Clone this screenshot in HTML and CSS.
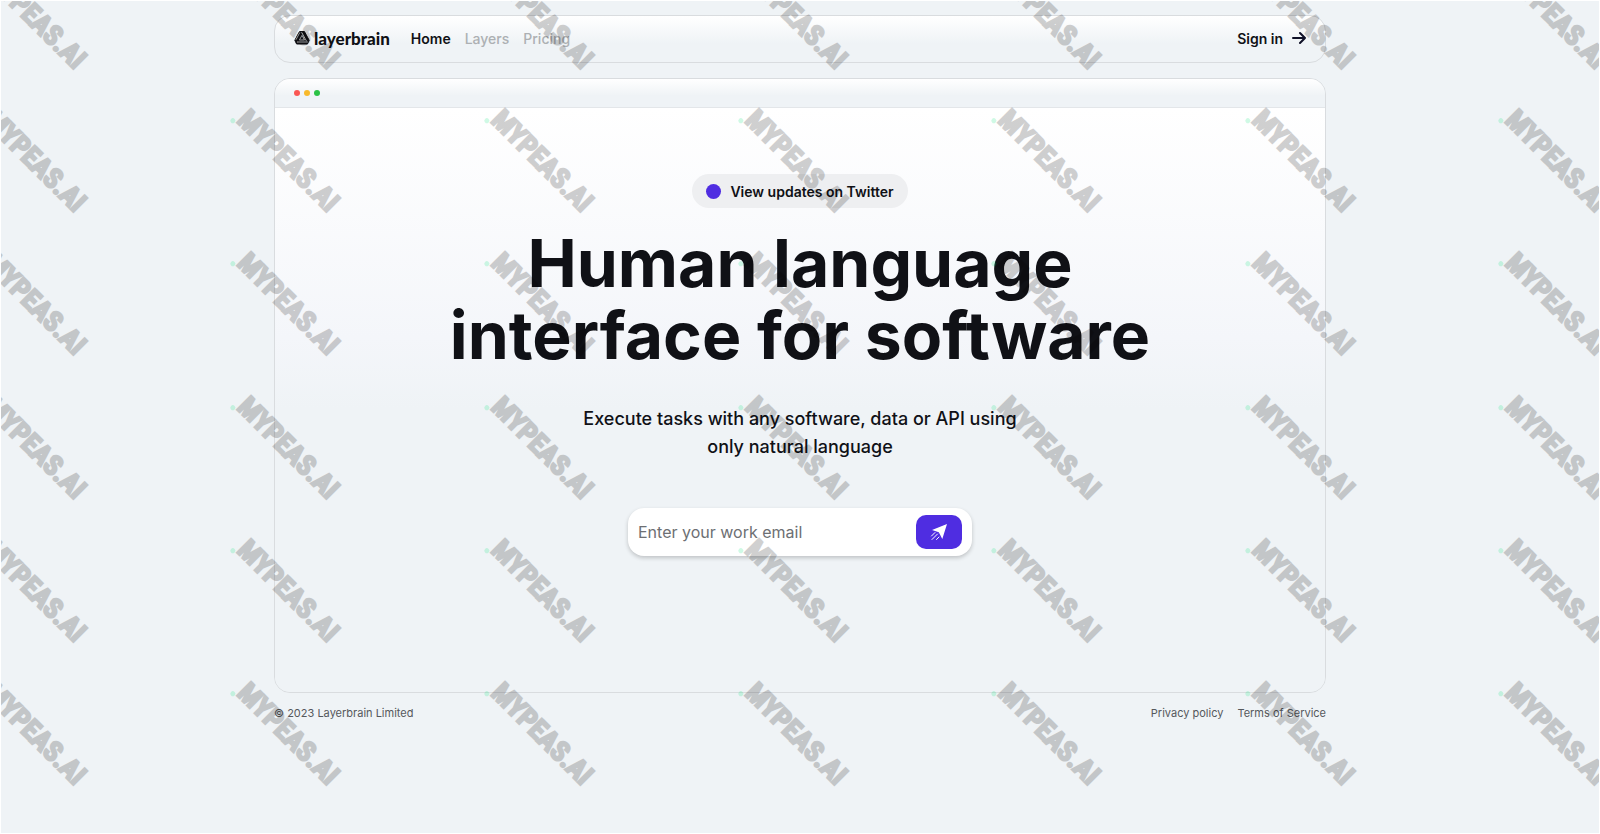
FILE: index.html
```html
<!DOCTYPE html>
<html lang="en">
<head>
<meta charset="utf-8">
<meta name="viewport" content="width=device-width, initial-scale=1">
<title>Layerbrain</title>
<link rel="stylesheet" href="styles.css">
</head>
<body>
<div class="page">
  <header class="nav">
    <a class="brand" href="#">
      <svg class="brand-mark" viewBox="0 0 16 16" aria-hidden="true">
        <path class="mark-body" d="M5.600 1.500h4.800L15.200 10.300l-1.800 3.700H2.600L.8 10.300z"/>
        <path class="mark-line" d="M8 5.300 10.600 10H5.400zM5.800 2.500 2 9.700M7.600 2.300l5 9M13.800 12H3"/>
      </svg>
      <span>layerbrain</span>
    </a>
    <nav class="links">
      <a class="link active" href="#">Home</a>
      <a class="link" href="#">Layers</a>
      <a class="link" href="#">Pricing</a>
    </nav>
    <a class="signin" href="#">Sign in
      <svg class="arrow" viewBox="0 0 14 14" aria-hidden="true"><path d="M1 7h12M8 2l5 5-5 5"/></svg>
    </a>
  </header>
  <main class="window">
    <div class="titlebar"><i class="dot red"></i><i class="dot yellow"></i><i class="dot green"></i></div>
    <section class="hero">
      <a class="pill" href="#"><i class="pill-dot"></i>View updates on Twitter</a>
      <h1 class="title">Human language<br>interface for software</h1>
      <p class="lead">Execute tasks with any software, data or API using<br>only natural language</p>
      <form class="signup">
        <input class="email" type="email" aria-label="Work email" placeholder="Enter your work email">
        <button class="send" type="button" aria-label="Send">
          <svg class="plane" viewBox="0 0 18 18" aria-hidden="true"><path class="wing" d="M17 1 12.300 16 8.800 9.200 2 7z"/><path class="trail" d="M1.500 13 5 9.500M2 16.500l5.500-5.500M6.500 16.500l2.500-2.500"/></svg>
        </button>
      </form>
    </section>
  </main>
  <footer class="footer">
    <span>© 2023 Layerbrain Limited</span>
    <nav class="legal"><a href="#">Privacy policy</a><a href="#">Terms of Service</a></nav>
  </footer>
</div>
<div class="overlay" aria-hidden="true">
<div class="marks">
  <span class="mark">MYPEAS.AI</span><span class="mark">MYPEAS.AI</span><span class="mark">MYPEAS.AI</span><span class="mark">MYPEAS.AI</span><span class="mark">MYPEAS.AI</span><span class="mark">MYPEAS.AI</span><span class="mark">MYPEAS.AI</span>
  <span class="mark">MYPEAS.AI</span><span class="mark">MYPEAS.AI</span><span class="mark">MYPEAS.AI</span><span class="mark">MYPEAS.AI</span><span class="mark">MYPEAS.AI</span><span class="mark">MYPEAS.AI</span><span class="mark">MYPEAS.AI</span>
  <span class="mark">MYPEAS.AI</span><span class="mark">MYPEAS.AI</span><span class="mark">MYPEAS.AI</span><span class="mark">MYPEAS.AI</span><span class="mark">MYPEAS.AI</span><span class="mark">MYPEAS.AI</span><span class="mark">MYPEAS.AI</span>
  <span class="mark">MYPEAS.AI</span><span class="mark">MYPEAS.AI</span><span class="mark">MYPEAS.AI</span><span class="mark">MYPEAS.AI</span><span class="mark">MYPEAS.AI</span><span class="mark">MYPEAS.AI</span><span class="mark">MYPEAS.AI</span>
  <span class="mark">MYPEAS.AI</span><span class="mark">MYPEAS.AI</span><span class="mark">MYPEAS.AI</span><span class="mark">MYPEAS.AI</span><span class="mark">MYPEAS.AI</span><span class="mark">MYPEAS.AI</span><span class="mark">MYPEAS.AI</span>
  <span class="mark">MYPEAS.AI</span><span class="mark">MYPEAS.AI</span><span class="mark">MYPEAS.AI</span><span class="mark">MYPEAS.AI</span><span class="mark">MYPEAS.AI</span><span class="mark">MYPEAS.AI</span><span class="mark">MYPEAS.AI</span>
</div>
</div>
</body>
</html>
```
FILE: styles.css
```css
* { box-sizing: border-box; }
body {
  position: relative;
  min-height: 100vh;
  margin: 0;
  border: 1px solid #fff;
  background: #eff3f6;
  color: #101116;
  font-family: Inter, "Liberation Sans", sans-serif;
}
a { color: inherit; text-decoration: none; }
.page { max-width: 1084px; margin: 0 auto; padding: 14px 16px; }
.nav {
  display: flex;
  align-items: center;
  height: 48px;
  padding: 0 19px 2px;
  border: 1px solid #d9dcdf;
  border-radius: 16px;
  background: linear-gradient(#fff, #eff3f6 60%);
  font-size: 14px;
  font-weight: 600;
}
.brand { display: flex; align-items: center; gap: 4px; font: 900 17px Lato, sans-serif; }
.brand-mark { width: 16px; height: 16px; }
.mark-body { fill: #101116; stroke: #101116; stroke-width: 1; stroke-linejoin: round; }
.mark-line { fill: none; stroke: #b9bcbf; stroke-width: 1; }
.links { display: flex; gap: 14px; margin-left: 21px; }
.link { color: #adb0b3; font-weight: 500; }
.active { color: #101116; font-weight: 600; }
.signin { display: flex; align-items: center; gap: 9px; margin-left: auto; }
.arrow { width: 14px; height: 14px; fill: none; stroke: #101128; stroke-width: 2; stroke-linecap: round; stroke-linejoin: round; }
.window { margin-top: 15px; border: 1px solid #d9dcdf; border-radius: 16px; overflow: hidden; }
.titlebar {
  display: flex;
  align-items: center;
  gap: 4px;
  height: 29px;
  padding: 0 19px;
  border-bottom: 1px solid #e3e6e9;
  background: linear-gradient(#fff, #eff3f6 60%);
}
.dot { width: 6px; height: 6px; border-radius: 50%; }
.red { background: #fa5753; }
.yellow { background: #f8b92b; }
.green { background: #2bc245; }
.hero {
  display: flex;
  flex-direction: column;
  align-items: center;
  padding: 66px 16px 136px;
  background: linear-gradient(#fff, #f4f6fa 230px, #eff3f6 300px);
  text-align: center;
}
.pill {
  display: flex;
  align-items: center;
  gap: 9px;
  height: 34px;
  padding: 0 14px;
  border-radius: 17px;
  background: #eeeff1;
  font-size: 14px;
  font-weight: 600;
}
.pill-dot { width: 15px; height: 15px; border-radius: 50%; background: #4f2de1; }
.title { margin: 19px 0 0; font-size: 66px; font-weight: 700; line-height: 72px; }
.lead { margin: 34px 0 0; font-size: 18px; font-weight: 500; line-height: 28px; }
.signup {
  display: flex;
  align-items: center;
  width: 344px;
  height: 48px;
  margin-top: 47px;
  padding: 0 10px;
  border-radius: 16px;
  background: #fff;
  box-shadow: 0 2px 4px rgba(0, 0, 0, 0.2);
}
.email { flex: 1; min-width: 0; padding: 0; border: 0; outline: 0; background: none; color: #101116; font: 400 16px Inter, sans-serif; }
.email::placeholder { color: #6d6f73; opacity: 1; }
.send { display: grid; place-items: center; width: 46px; height: 34px; padding: 0; border: 0; border-radius: 10px; background: #4f2de1; }
.plane { width: 18px; height: 18px; }
.wing { fill: #fff; }
.trail { fill: none; stroke: #fff; stroke-width: 1; stroke-linecap: round; }
.footer { display: flex; justify-content: space-between; margin-top: 13px; color: #55585c; font-size: 11px; line-height: 14px; }
.legal { display: flex; gap: 14px; }
.overlay { position: absolute; inset: 0; overflow: hidden; pointer-events: none; }
.marks {
  position: absolute;
  top: -55px;
  left: -93px;
  display: grid;
  grid-template-columns: repeat(7, 1fr);
  grid-template-rows: repeat(6, 1fr);
  place-items: center;
  width: 1775px;
  height: 860px;
}
.mark {
  position: relative;
  transform: rotate(45deg);
  color: #000;
  opacity: 0.18;
  font: 700 28px/30px "Roboto Condensed", "Open Sans Condensed", "Noto Sans Condensed", Roboto, sans-serif;
  -webkit-text-stroke: 2px #000;
}
.mark::before {
  content: "";
  position: absolute;
  left: -5px;
  bottom: 2px;
  width: 5px;
  height: 5px;
  border-radius: 50%;
  background: #00e676;
}
```
